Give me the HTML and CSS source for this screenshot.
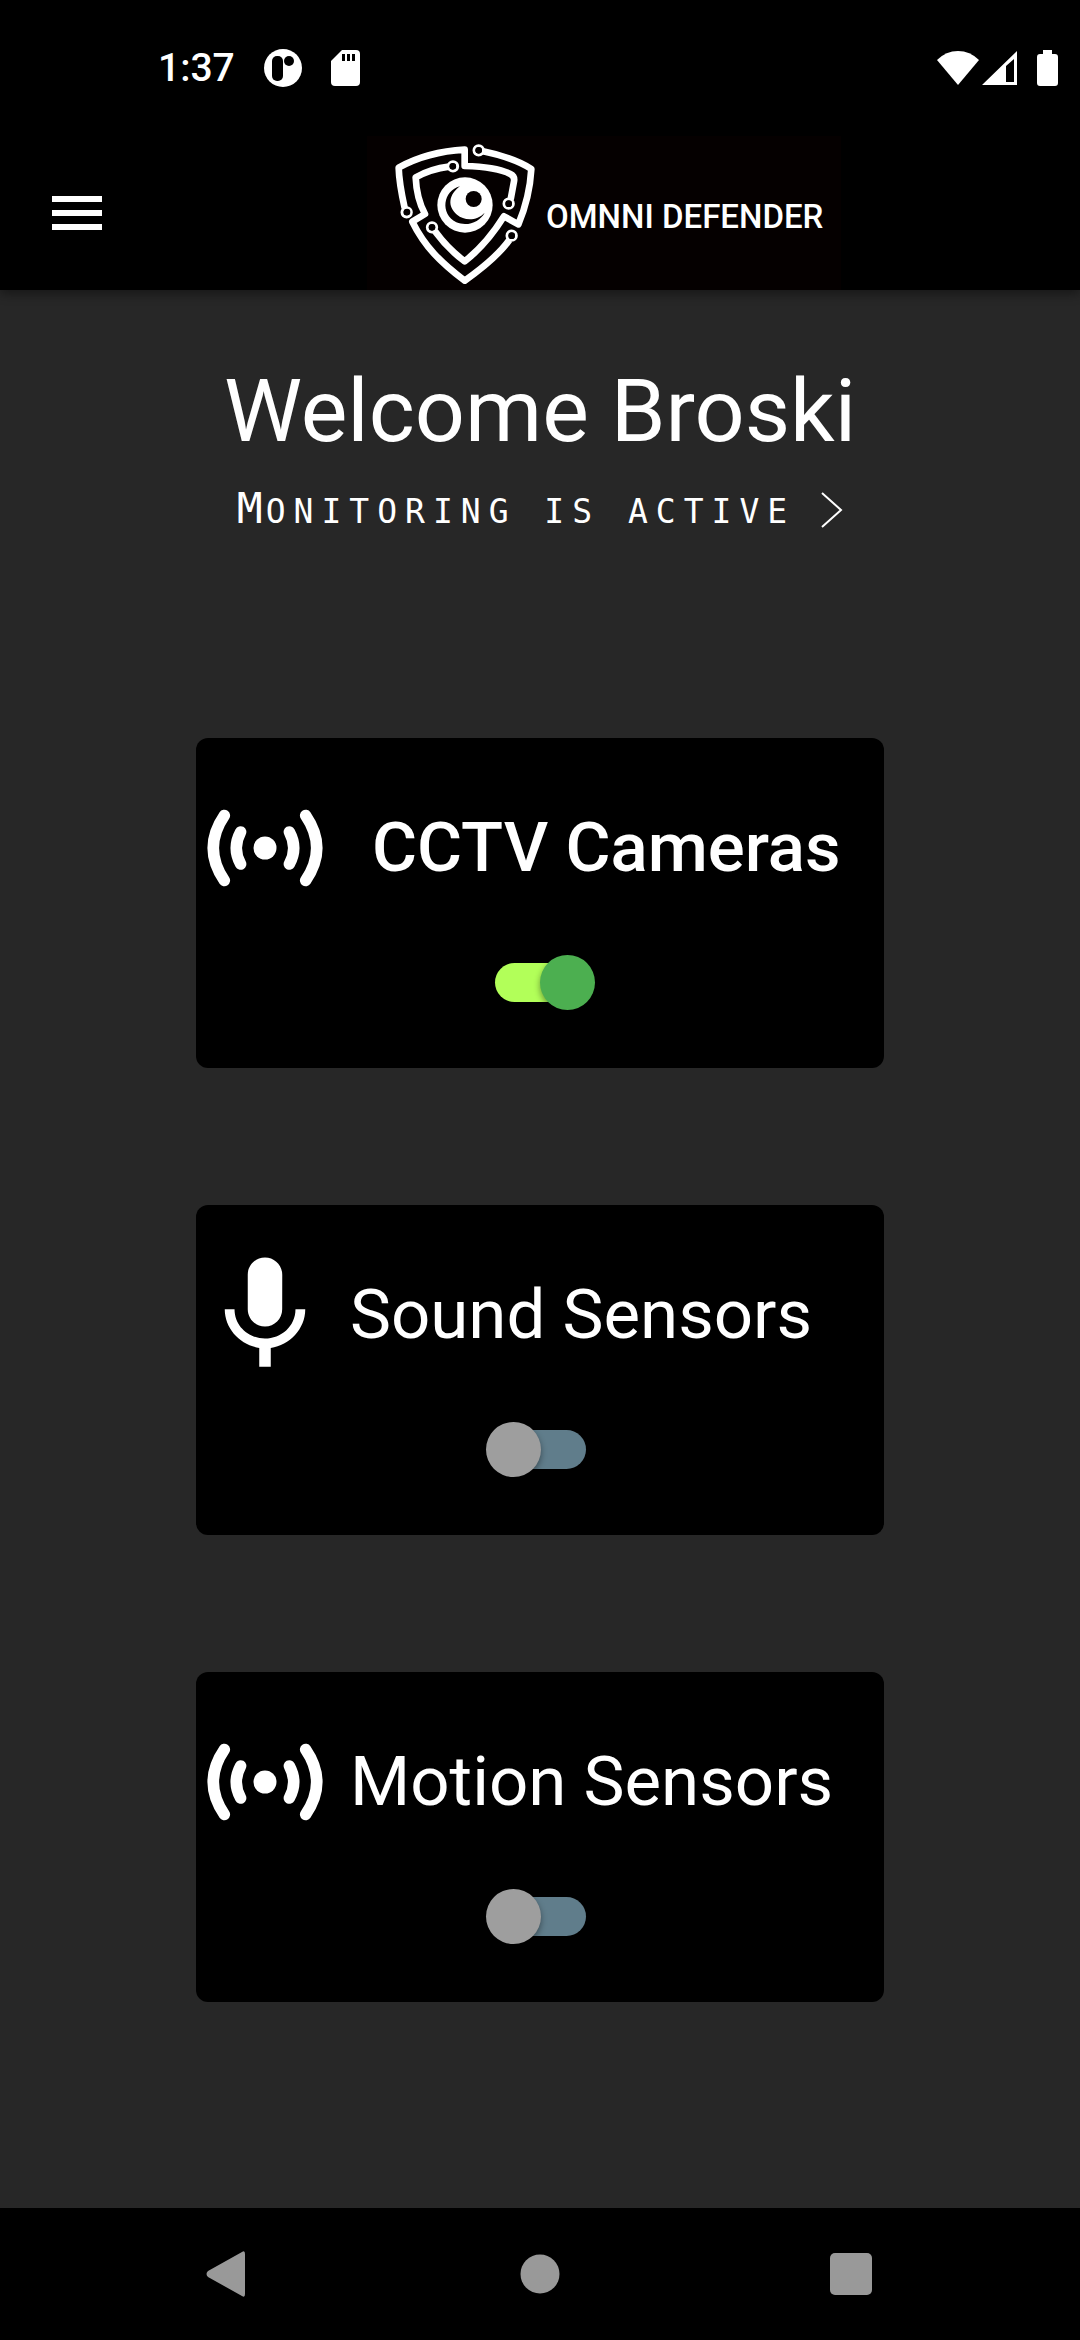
FILE: index.html
```html
<!DOCTYPE html>
<html lang="en">
<head>
<meta charset="utf-8">
<meta name="viewport" content="width=device-width, initial-scale=1">
<title>Omnni Defender</title>
<link rel="stylesheet" href="styles.css">
</head>
<body>
<div class="status-bar">
  <div class="status-group status-left">
    <time class="clock">1:37</time>
    <svg width="38" height="38" viewBox="0 0 38 38" aria-hidden="true"><circle cx="19" cy="19" r="19" fill="#fff"/><rect x="8" y="7" width="11" height="25" rx="5"/><circle cx="25" cy="12" r="5"/></svg>
    <svg width="29" height="36" viewBox="0 0 29 36" aria-hidden="true"><path fill="#fff" d="M11 0H25Q29 0 29 4V32Q29 36 25 36H4Q0 36 0 32V11Z"/><path d="M11 4h3v7h-3zM16 4h3v7h-3zM21 4h3v7h-3z"/></svg>
  </div>
  <div class="status-group status-right">
    <svg width="42" height="36" viewBox="0 0 42 36" aria-hidden="true"><path fill="#fff" d="M0 10Q9 1 21 1T42 10L21 35Z"/></svg>
    <svg class="signal" width="35" height="36" viewBox="0 0 35 36" aria-hidden="true"><path fill="#fff" fill-rule="evenodd" d="M0 35L35 1V35ZM24 16V32H32V9Z"/></svg>
    <svg width="21" height="36" viewBox="0 0 21 36" aria-hidden="true"><path fill="#fff" d="M6 0H15V4H18Q21 4 21 7V33Q21 36 18 36H3Q0 36 0 33V7Q0 4 3 4H6Z"/></svg>
  </div>
</div>

<header class="app-bar">
  <button class="menu-button" type="button" aria-label="Open menu">
    <svg width="50" height="34" viewBox="0 0 50 34"><path fill="#fff" d="M0 0h50v6H0zM0 14h50v6H0zM0 28h50v6H0z"/></svg>
  </button>
  <div class="brand">
    <svg width="140" height="140" viewBox="103 43 420 420" aria-hidden="true">
      <g fill="none" stroke="#fff" stroke-width="20" stroke-linejoin="round">
        <path d="M132 235C122 190 115 155 114 114Q200 66 312 60V109Q410 112 449 133Q463 140 460 155L450 209"/>
        <path d="M265 111Q210 118 165 143C167 190 176 222 193 253L155 276C192 351 240 398 312 453C370 412 419 369 446 331"/>
        <path d="M223 305C247 338 274 367 312 395C356 361 400 308 430 260L473 284C498 225 509 170 512 118C475 94 425 77 367 65"/>
        <g stroke-width="9"><circle cx="138" cy="248" r="14"/><circle cx="277" cy="110" r="14"/><circle cx="444" cy="222" r="14"/><circle cx="453" cy="318" r="14"/><circle cx="214" cy="293" r="14"/><circle cx="354" cy="62" r="14"/></g>
      </g>
      <circle cx="313" cy="226" r="83" fill="#fff"/>
      <path fill="#050000" d="M298 170C247 183 237 253 287 278C321 292 358 276 372 249C349 274 311 274 289 255C259 230 264 195 298 170Z"/>
      <circle cx="339" cy="208" r="24" fill="#050000"/>
      <g fill="#050000"><circle cx="139" cy="247" r="10"/><circle cx="276" cy="110" r="10"/><circle cx="444" cy="222" r="10"/><circle cx="453" cy="318" r="10"/><circle cx="214" cy="293" r="10"/><circle cx="354" cy="62" r="10"/></g>
    </svg>
    <span class="brand-name">OMNNI DEFENDER</span>
  </div>
</header>

<main class="content">
  <h1 class="welcome">Welcome Broski</h1>
  <button class="monitoring" type="button">
    <span class="monitoring-text">Monitoring is active</span>
    <svg width="22" height="36" viewBox="0 0 22 36" aria-hidden="true"><path d="M1 1L20 18L1 35" fill="none" stroke="#fff" stroke-width="2"/></svg>
  </button>

  <div class="cards">
    <section class="card">
      <div class="card-head">
        <svg class="card-icon" viewBox="0 0 24 24" aria-hidden="true"><use href="#sensors"/></svg>
        <label class="card-title card-title-strong" for="cctv">CCTV Cameras</label>
      </div>
      <input class="switch" id="cctv" type="checkbox" role="switch" checked>
    </section>
    <section class="card">
      <div class="card-head">
        <svg class="card-icon" viewBox="0 0 24 24" aria-hidden="true"><path fill="#fff" d="M12 14c1.660 0 2.990-1.340 2.990-3L15 5c0-1.660-1.340-3-3-3S9 3.340 9 5v6c0 1.660 1.340 3 3 3zm5.300-3c0 3-2.540 5.100-5.300 5.100S6.700 14 6.700 11H5c0 3.410 2.720 6.230 6 6.720V21h2v-3.280c3.280-.480 6-3.300 6-6.720h-1.700z"/></svg>
        <label class="card-title" for="sound">Sound Sensors</label>
      </div>
      <input class="switch" id="sound" type="checkbox" role="switch">
    </section>
    <section class="card">
      <div class="card-head">
        <svg class="card-icon" viewBox="0 0 24 24" aria-hidden="true"><use href="#sensors"/></svg>
        <label class="card-title" for="motion">Motion Sensors</label>
      </div>
      <input class="switch" id="motion" type="checkbox" role="switch">
    </section>
  </div>
</main>

<nav class="system-nav" aria-label="System">
  <button type="button" aria-label="Back"><svg width="66" height="66" viewBox="0 0 66 66"><path fill="#999" d="M46 11Q49 9 49 13V53Q49 57 46 55L12 36Q9 33 12 30Z"/></svg></button>
  <button type="button" aria-label="Home"><svg width="66" height="66" viewBox="0 0 66 66"><circle cx="33" cy="33" r="19.500" fill="#999"/></svg></button>
  <button type="button" aria-label="Recent apps"><svg width="66" height="66" viewBox="0 0 66 66"><rect x="12" y="12" width="42" height="42" rx="5" fill="#999"/></svg></button>
</nav>

<svg width="0" height="0" class="sprite" aria-hidden="true">
  <symbol id="sensors" viewBox="0 0 24 24">
    <g fill="none" stroke="#fff" stroke-width="2" stroke-linecap="round"><path d="M4.930 6.350Q1.070 12 4.930 17.650M19.070 6.350Q22.930 12 19.070 17.650M7.760 9.200Q6.240 12 7.760 14.800M16.240 9.200Q17.760 12 16.240 14.800"/></g>
    <circle cx="12" cy="12" r="2" fill="#fff"/>
  </symbol>
</svg>
</body>
</html>
```
FILE: styles.css
```css
* {
  box-sizing: border-box;
}

body {
  display: flex;
  flex-direction: column;
  min-height: 100vh;
  margin: 0;
  background: #272727;
  color: #fff;
  font-family: Roboto, "Liberation Sans", sans-serif;
}

button {
  display: flex;
  align-items: center;
  margin: 0;
  padding: 0;
  border: 0;
  background: none;
  color: inherit;
  cursor: pointer;
}

svg {
  display: block;
  flex: none;
}

.sprite {
  position: absolute;
}

.status-bar {
  display: flex;
  align-items: center;
  justify-content: space-between;
  height: 136px;
  padding: 0 22px 0 158px;
  background: #000;
}

.status-group {
  display: flex;
  align-items: center;
}

.status-left {
  gap: 29px;
}

.clock {
  font-size: 39px;
  font-weight: 500;
}

.signal {
  margin: 0 20px 0 3px;
}

.app-bar {
  position: relative;
  display: grid;
  grid-template-columns: 1fr auto 1fr;
  align-items: center;
  height: 154px;
  padding-left: 52px;
  background: #000;
  box-shadow: 0 4px 10px rgba(0, 0, 0, 0.4);
}

.app-bar .brand {
  margin-left: 76px;
}

.brand {
  display: flex;
  align-items: center;
  gap: 11px;
  width: 474px;
  height: 154px;
  padding: 2px 0 0 28px;
  background: #050000;
}

.brand-name {
  padding-top: 6px;
  font-size: 33px;
  font-weight: 500;
  line-height: 40px;
  white-space: nowrap;
}

.content {
  display: flex;
  flex: 1;
  flex-direction: column;
  align-items: center;
  padding: 69px 16px 137px;
}

.welcome {
  margin: 0;
  font-size: 88px;
  font-weight: 400;
  line-height: 104px;
  text-align: center;
}

.monitoring {
  gap: 26px;
  height: 66px;
  margin-top: 14px;
}

.monitoring-text {
  display: block;
  font-family: "DejaVu Sans Mono", monospace;
  font-size: 33px;
  line-height: 66px;
  letter-spacing: 8px;
  text-transform: uppercase;
}

.monitoring-text::first-letter {
  font-size: 43px;
  letter-spacing: 3px;
}

.cards {
  display: flex;
  flex-direction: column;
  gap: 137px;
  width: 100%;
  max-width: 688px;
  margin-top: 195px;
}

.card {
  display: flex;
  flex-direction: column;
  align-items: center;
  gap: 38px;
  padding: 41px 0 58px;
  border-radius: 12px;
  background: #000;
}

.card-head {
  display: flex;
  align-items: center;
  gap: 16px;
  width: 100%;
}

.card-icon {
  width: 138px;
  height: 138px;
}

.card-title {
  font-size: 69px;
  line-height: 80px;
  white-space: nowrap;
}

.card-title-strong {
  padding-left: 22px;
  font-weight: 500;
}

/* Track and thumb share one grid cell so the thumb overlaps the track ends. */
.switch {
  display: grid;
  align-items: center;
  width: 109px;
  height: 55px;
  margin: 0;
  appearance: none;
  cursor: pointer;
}

.switch::before,
.switch::after {
  grid-area: 1 / 1;
  content: "";
}

.switch::before {
  justify-self: center;
  width: 91px;
  height: 39px;
  border-radius: 20px;
  background: #607d8b;
}

.switch::after {
  justify-self: start;
  width: 55px;
  height: 55px;
  border-radius: 50%;
  background: #9e9e9e;
  box-shadow: 0 3px 6px rgba(0, 0, 0, 0.4);
}

.switch:checked::before {
  background: #b2ff59;
}

.switch:checked::after {
  justify-self: end;
  background: #4caf50;
}

.system-nav {
  display: flex;
  align-items: center;
  justify-content: space-between;
  height: 132px;
  padding: 0 196px;
  background: #000;
}
```
